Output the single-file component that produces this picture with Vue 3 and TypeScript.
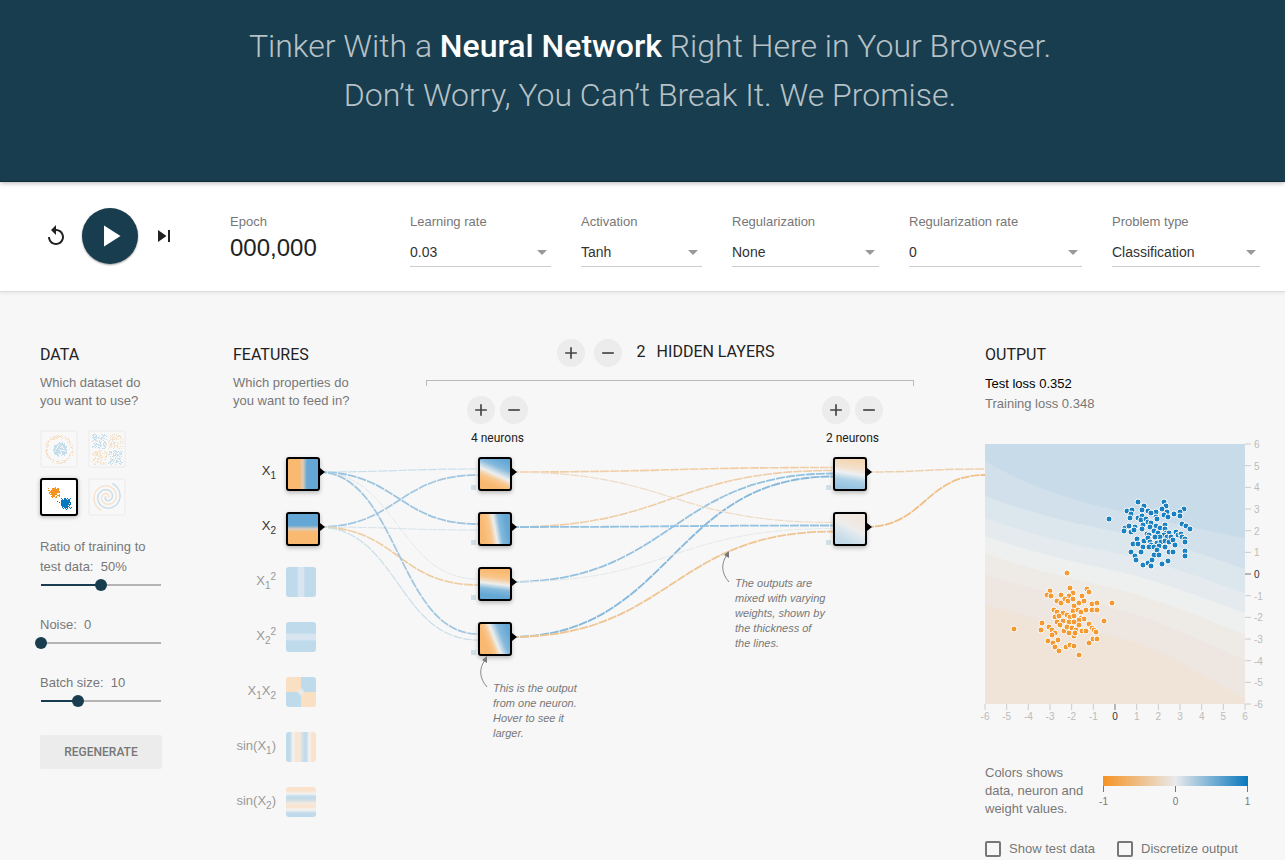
<script setup lang="ts">
import { computed, onBeforeUnmount, onMounted, ref } from 'vue'

type Pt = [number, number]

const selects = [
  { id: 'rate', label: 'Learning rate', value: '0.03', options: ['0.001', '0.01', '0.03', '0.1', '1'] },
  { id: 'activation', label: 'Activation', value: 'Tanh', options: ['ReLU', 'Tanh', 'Sigmoid', 'Linear'] },
  { id: 'regularization', label: 'Regularization', value: 'None', options: ['None', 'L1', 'L2'] },
  { id: 'regrate', label: 'Regularization rate', value: '0', options: ['0', '0.001', '0.01', '0.1'] },
  { id: 'problem', label: 'Problem type', value: 'Classification', options: ['Classification', 'Regression'] },
]

const ratio = ref(50)
const noise = ref(0)
const batch = ref(10)
const share = (v: number, min: number, max: number) => ({ '--fill': String((v - min) / (max - min)) })

/* Deterministic pseudo-random source for the dataset thumbnails */
let seed = 11
function rnd(): number {
  seed = (seed * 16807) % 2147483647
  return seed / 2147483647
}
function gauss(): number {
  return (rnd() + rnd() + rnd() + rnd() - 2) * 1.7
}
const BLUE = '#0877bd'
const ORANGE = '#f59322'
interface Dot { x: number; y: number; c: string }
function blob(n: number, cx: number, cy: number, s: number, c: string): Dot[] {
  return Array.from({ length: n }, () => ({ x: Math.round(cx + gauss() * s), y: Math.round(cy + gauss() * s), c }))
}
const circleDots: Dot[] = [
  ...Array.from({ length: 200 }, () => {
    const a = rnd() * Math.PI * 2
    const r = Math.sqrt(rnd()) * 7
    return { x: Math.round(18 + r * Math.cos(a)), y: Math.round(17 + r * Math.sin(a)), c: BLUE }
  }),
  ...Array.from({ length: 170 }, () => {
    const a = rnd() * Math.PI * 2
    const r = 11.5 + rnd() * 3
    return { x: Math.round(17 + r * Math.cos(a)), y: Math.round(17 + r * Math.sin(a)), c: ORANGE }
  }),
]
const xorDots: Dot[] = Array.from({ length: 430 }, () => {
  const x = Math.round(rnd() * 14) + (rnd() > 0.5 ? 18 : 2)
  const y = Math.round(rnd() * 14) + (rnd() > 0.5 ? 18 : 2)
  return { x, y, c: (x > 16) === (y > 16) ? BLUE : ORANGE }
})
const gaussDots: Dot[] = [
  ...blob(260, 12, 12, 2.1, ORANGE),
  ...blob(260, 23, 23, 2.3, BLUE),
  { x: 15, y: 21, c: BLUE },
  { x: 28, y: 18, c: BLUE },
]
function spiral(phase: number): string {
  const pts: string[] = []
  for (let i = 0; i <= 60; i++) {
    const t = (i / 60) * Math.PI * 3.5
    const r = 1 + (i / 60) * 13.5
    pts.push(`${(17 + r * Math.sin(t + phase)).toFixed(1)},${(17 + r * Math.cos(t + phase)).toFixed(1)}`)
  }
  return pts.join(' ')
}
const datasets = [
  { name: 'Circle', dots: circleDots },
  { name: 'Exclusive or', dots: xorDots },
  { name: 'Gaussian', dots: gaussDots },
  { name: 'Spiral', dots: [] as Dot[] },
]
const dataset = ref('Gaussian')

/* Network geometry */
const ROW = 55
const TOP = 61
const FEATURE_X = 53
const features = [
  { pre: '', a: '1', sup: '', b: '', post: '', look: 'f-x1', on: true },
  { pre: '', a: '2', sup: '', b: '', post: '', look: 'f-x2', on: true },
  { pre: '', a: '1', sup: '2', b: '', post: '', look: 'f-x1sq', on: false },
  { pre: '', a: '2', sup: '2', b: '', post: '', look: 'f-x2sq', on: false },
  { pre: '', a: '1', sup: '', b: '2', post: '', look: 'f-x1x2', on: false },
  { pre: 'sin(', a: '1', sup: '', b: '', post: ')', look: 'f-sin1', on: false },
  { pre: 'sin(', a: '2', sup: '', b: '', post: ')', look: 'f-sin2', on: false },
]
const network = ref<HTMLElement | null>(null)
const width = ref(752)
let observer: ResizeObserver | undefined
onMounted(() => {
  if (!network.value) return
  width.value = network.value.clientWidth
  observer = new ResizeObserver(() => {
    if (network.value) width.value = network.value.clientWidth
  })
  observer.observe(network.value)
})
onBeforeUnmount(() => observer?.disconnect())

const layers = computed(() => [
  { x: 245, looks: ['n-a', 'n-b', 'n-c', 'n-d'] },
  { x: width.value - 152, looks: ['n-e', 'n-f'] },
])
const at = (x: number, row: number) => ({ left: `${x}px`, top: `${TOP + ROW * row}px` })

interface Link { d: string; w: number; c: string }
function link(x1: number, r1: number, x2: number, r2: number, i: number, n: number, w: number, c: string): Link {
  const y1 = TOP + ROW * r1 + 15
  const y2 = TOP + ROW * r2 + 15 + ((i - (n - 1) / 2) / n) * 12
  const m = (x1 + 32 + x2) / 2
  return { d: `M${x1 + 32},${y1}C${m},${y1} ${m},${y2} ${x2},${y2}`, w, c }
}
const links = computed<Link[]>(() => {
  const f = FEATURE_X
  const [a, b] = layers.value.map((l) => l.x)
  const o = width.value
  return [
    link(f, 0, a, 0, 0, 2, 1.2, '#c9dfea'),
    link(f, 1, a, 0, 1, 2, 1.7, '#a0c6e0'),
    link(f, 0, a, 1, 0, 2, 1.8, '#9bc4e0'),
    link(f, 1, a, 1, 1, 2, 1, '#d6e3ea'),
    link(f, 0, a, 2, 0, 2, 0.9, '#e2e5e7'),
    link(f, 1, a, 2, 1, 2, 1.6, '#efcba0'),
    link(f, 0, a, 3, 0, 2, 1.7, '#a0c6e0'),
    link(f, 1, a, 3, 1, 2, 1.2, '#c9dfea'),
    link(a, 0, b, 0, 0, 4, 1.6, '#efcda6'),
    link(a, 1, b, 0, 1, 4, 1.6, '#efcda6'),
    link(a, 2, b, 0, 2, 4, 1.8, '#94c1df'),
    link(a, 3, b, 0, 3, 4, 1.9, '#86b9dc'),
    link(a, 0, b, 1, 0, 4, 1.2, '#eedac4'),
    link(a, 1, b, 1, 1, 4, 1.8, '#94c1df'),
    link(a, 2, b, 1, 2, 4, 0.9, '#e3e5e6'),
    link(a, 3, b, 1, 3, 4, 1.8, '#efc592'),
    link(b, 0, o, 0, 0, 2, 1.5, '#efd0ac'),
    link(b, 1, o, 0, 1, 2, 1.8, '#efbf83'),
  ]
})

/* Output plot */
const ticks = [-6, -5, -4, -3, -2, -1, 0, 1, 2, 3, 4, 5, 6]
const scale = (v: number) => ((v + 6) * 260) / 12
const bands = [
  { c: '#d2e0eb', d: 'M0,17 C40,41 85,56 130,66 S225,88 260,94 V260 H0Z' },
  { c: '#dbe6ed', d: 'M0,52 C45,69 90,80 135,88 S225,113 260,125 V260 H0Z' },
  { c: '#e4eaee', d: 'M0,74 C45,90 90,101 135,110 S225,137 260,149 V260 H0Z' },
  { c: '#eef0ef', d: 'M0,92 C45,108 90,118 135,128 S225,157 260,169 V260 H0Z' },
  { c: '#eeebe7', d: 'M0,109 C45,126 90,135 135,146 S225,177 260,190 V260 H0Z' },
  { c: '#eee6e0', d: 'M0,130 C45,145 90,154 135,166 S225,201 260,216 V260 H0Z' },
  { c: '#efe4d7', d: 'M0,160 C45,175 90,182 135,194 S225,237 260,255 V260 H0Z' },
]
const bluePoints: Pt[] = [
  [153, 58], [179, 58], [181, 62], [159, 62], [142, 67], [147, 66], [146, 70], [157, 66], [163, 67], [171, 68],
  [177, 65], [182, 68], [199, 65], [195, 68], [189, 70], [195, 72], [124, 75], [145, 74], [153, 74], [157, 72],
  [156, 76], [161, 75], [166, 69], [171, 73], [179, 71], [183, 73], [172, 75], [197, 80], [201, 82], [205, 85],
  [140, 84], [144, 82], [150, 83], [139, 87], [146, 88], [149, 86], [158, 81], [157, 85], [163, 78], [166, 79],
  [165, 83], [171, 82], [175, 84], [180, 81], [180, 85], [169, 87], [173, 89], [162, 90], [164, 91], [181, 89],
  [184, 89], [179, 91], [191, 88], [193, 91], [196, 90], [197, 93], [200, 95], [200, 98], [175, 93], [182, 93],
  [186, 93], [152, 95], [148, 100], [153, 100], [159, 97], [163, 94], [165, 98], [166, 101], [170, 93], [172, 99],
  [176, 98], [180, 97], [184, 98], [188, 96], [190, 101], [158, 103], [164, 103], [169, 103], [174, 102], [180, 103],
  [172, 106], [146, 108], [156, 108], [150, 112], [151, 116], [169, 111], [174, 111], [184, 108], [188, 108], [200, 107],
  [200, 112], [158, 121], [163, 119], [167, 116], [166, 122], [177, 120], [183, 117],
]
const orangePoints: Pt[] = [
  [82, 129], [85, 144], [102, 145], [104, 148], [65, 147], [62, 151], [66, 152], [76, 151], [88, 149], [84, 152],
  [97, 152], [127, 159], [72, 157], [76, 159], [80, 155], [83, 157], [88, 155], [94, 159], [99, 157], [89, 162],
  [107, 160], [112, 159], [69, 166], [72, 168], [78, 169], [88, 167], [93, 166], [96, 168], [101, 166], [107, 166],
  [112, 166], [119, 177], [70, 173], [74, 172], [82, 171], [85, 173], [89, 172], [96, 174], [99, 175], [94, 176],
  [78, 177], [72, 178], [84, 178], [89, 178], [57, 179], [29, 185], [56, 186], [64, 183], [67, 186], [70, 189],
  [67, 191], [75, 181], [79, 187], [82, 183], [84, 189], [87, 184], [91, 186], [94, 181], [97, 187], [101, 187],
  [104, 180], [107, 184], [109, 186], [111, 188], [89, 192], [90, 189], [63, 197], [68, 199], [73, 196], [70, 203],
  [74, 207], [81, 203], [85, 201], [89, 202], [94, 211], [104, 199], [108, 195], [112, 195],
]
</script>

<template>
  <div class="page">
    <header class="banner">
      <h1>
        Tinker With a <b>Neural Network</b> Right Here in Your Browser.<br />
        Don’t Worry, You Can’t Break It. We Promise.
      </h1>
    </header>

    <section class="controls">
      <div class="timeline">
        <button class="icon-btn" type="button" aria-label="Reset">
          <svg width="24" height="24" viewBox="0 0 24 24"><path d="M12 5V1L7 6l5 5V7c3.31 0 6 2.69 6 6s-2.69 6-6 6-6-2.69-6-6H4c0 4.42 3.58 8 8 8s8-3.58 8-8-3.58-8-8-8z" /></svg>
        </button>
        <button class="play" type="button" aria-label="Run">
          <svg width="36" height="36" viewBox="0 0 24 24"><path d="M8 5v14l11-7z" /></svg>
        </button>
        <button class="icon-btn" type="button" aria-label="Step">
          <svg width="24" height="24" viewBox="0 0 24 24"><path d="M6 18l8.5-6L6 6v12zM16 6v12h2V6h-2z" /></svg>
        </button>
      </div>
      <div class="epoch">
        <span class="caption">Epoch</span>
        <span class="count">000,000</span>
      </div>
      <div class="fields">
        <div v-for="s in selects" :key="s.id" class="field" :class="`field-${s.id}`">
          <label class="caption" :for="s.id">{{ s.label }}</label>
          <div class="select">
            <select :id="s.id">
              <option v-for="o in s.options" :key="o" :selected="o === s.value">{{ o }}</option>
            </select>
            <svg width="10" height="5" viewBox="0 0 10 5"><path d="M0 0h10L5 5z" /></svg>
          </div>
        </div>
      </div>
    </section>

    <main class="main">
      <section class="data">
        <h2>Data</h2>
        <p class="intro">Which dataset do you want to use?</p>
        <div class="thumbs">
          <button
            v-for="d in datasets"
            :key="d.name"
            type="button"
            class="thumb"
            :class="{ selected: dataset === d.name }"
            :aria-label="d.name"
            @click="dataset = d.name"
          >
            <svg width="34" height="34" viewBox="0 0 34 34">
              <rect v-for="(p, i) in d.dots" :key="i" :x="p.x" :y="p.y" width="1" height="1" :fill="p.c" />
              <g v-if="d.name === 'Spiral'" fill="none" stroke-width="1.4">
                <polyline :points="spiral(1.2)" stroke="#f59322" />
                <polyline :points="spiral(4.34)" stroke="#0877bd" />
              </g>
            </svg>
          </button>
        </div>
        <div class="slider">
          <label for="ratio">Ratio of training to test data:&nbsp; {{ ratio }}%</label>
          <input id="ratio" v-model.number="ratio" type="range" min="10" max="90" step="10" :style="share(ratio, 10, 90)" />
        </div>
        <div class="slider">
          <label for="noise">Noise:&nbsp; {{ noise }}</label>
          <input id="noise" v-model.number="noise" type="range" min="0" max="50" step="5" :style="share(noise, 0, 50)" />
        </div>
        <div class="slider">
          <label for="batch">Batch size:&nbsp; {{ batch }}</label>
          <input id="batch" v-model.number="batch" type="range" min="1" max="30" step="1" :style="share(batch, 1, 30)" />
        </div>
        <button class="regenerate" type="button">Regenerate</button>
      </section>

      <section ref="network" class="network">
        <div class="network-head">
          <div class="features-head">
            <h2>Features</h2>
            <p class="intro">Which properties do you want to feed in?</p>
          </div>
          <div class="layers-head">
            <div class="layers-title">
              <button class="round" type="button" aria-label="Add layer">
                <svg width="20" height="20" viewBox="0 0 24 24"><path d="M19 13h-6v6h-2v-6H5v-2h6V5h2v6h6v2z" /></svg>
              </button>
              <button class="round" type="button" aria-label="Remove layer">
                <svg width="20" height="20" viewBox="0 0 24 24"><path d="M19 13H5v-2h14v2z" /></svg>
              </button>
              <span class="layer-count">2</span>
              <h2>Hidden layers</h2>
            </div>
            <div class="bracket"></div>
          </div>
        </div>

        <div class="diagram">
          <svg class="links" width="100%" height="100%">
            <path v-for="(l, i) in links" :key="i" :d="l.d" :stroke="l.c" :stroke-width="l.w" />
          </svg>

          <template v-for="(f, i) in features" :key="f.look">
            <div class="feature-label" :class="{ off: !f.on }" :style="at(0, i)">
              <span>{{ f.pre }}X<sub>{{ f.a }}</sub><sup v-if="f.sup">{{ f.sup }}</sup><template v-if="f.b">X<sub>{{ f.b }}</sub></template>{{ f.post }}</span>
            </div>
            <button type="button" class="node" :class="[f.look, { off: !f.on }]" :aria-label="`Feature ${i + 1}`" :style="at(FEATURE_X, i)"></button>
          </template>

          <template v-for="(layer, k) in layers" :key="k">
            <div class="layer-tools" :style="{ left: `${layer.x - 11}px` }">
              <div class="layer-buttons">
                <button class="round" type="button" aria-label="Add neuron">
                  <svg width="20" height="20" viewBox="0 0 24 24"><path d="M19 13h-6v6h-2v-6H5v-2h6V5h2v6h6v2z" /></svg>
                </button>
                <button class="round" type="button" aria-label="Remove neuron">
                  <svg width="20" height="20" viewBox="0 0 24 24"><path d="M19 13H5v-2h14v2z" /></svg>
                </button>
              </div>
              <span>{{ layer.looks.length }} neurons</span>
            </div>
            <template v-for="(look, i) in layer.looks" :key="look">
              <i class="bias" :style="{ left: `${layer.x - 7}px`, top: `${TOP + ROW * i + 28}px` }"></i>
              <button type="button" class="node" :class="look" :aria-label="`Layer ${k + 1} neuron ${i + 1}`" :style="at(layer.x, i)"></button>
            </template>
          </template>

          <div class="callout callout-neuron">
            <svg width="14" height="34" viewBox="0 0 14 34"><path class="line" d="M8 33C0 24 0 14 6 6" /><path d="M8 2L8 9L3 6z" /></svg>
            <p>This is the output from one neuron. Hover to see it larger.</p>
          </div>
          <div class="callout callout-weights">
            <svg width="14" height="34" viewBox="0 0 14 34"><path class="line" d="M8 33C0 24 0 14 6 6" /><path d="M8 2L8 9L3 6z" /></svg>
            <p>The outputs are mixed with varying weights, shown by the thickness of the lines.</p>
          </div>
        </div>
      </section>

      <section class="output">
        <h2>Output</h2>
        <div class="losses">
          <div class="test">Test loss <span>0.352</span></div>
          <div>Training loss <span>0.348</span></div>
        </div>
        <svg class="plot" width="260" height="260" viewBox="0 0 260 260">
          <rect width="260" height="260" fill="#c8dbe9" />
          <path v-for="b in bands" :key="b.c" :d="b.d" :fill="b.c" />
          <g class="points">
            <circle v-for="(p, i) in bluePoints" :key="`b${i}`" :cx="p[0]" :cy="p[1]" r="3" fill="#0877bd" />
            <circle v-for="(p, i) in orangePoints" :key="`o${i}`" :cx="p[0]" :cy="p[1]" r="3" fill="#f59322" />
          </g>
          <g v-for="t in ticks" :key="t" class="tick" :class="{ zero: t === 0 }">
            <path :d="`M${scale(t)} 260v6`" />
            <text :x="scale(t)" y="276" text-anchor="middle">{{ t }}</text>
            <path :d="`M260 ${scale(-t)}h6`" />
            <text x="269" :y="scale(-t) + 4">{{ t }}</text>
          </g>
        </svg>
        <div class="legend">
          <p>Colors shows data, neuron and weight values.</p>
          <div class="colormap">
            <div class="ramp"></div>
            <div class="marks"><span>-1</span><span>0</span><span>1</span></div>
          </div>
        </div>
        <div class="checks">
          <label><input type="checkbox" />Show test data</label>
          <label><input type="checkbox" />Discretize output</label>
        </div>
      </section>
    </main>
  </div>
</template>

<style>
html,
body {
  background: #f7f7f7;
}
</style>

<style scoped>
.page {
  font-family: "Liberation Sans", Arial, sans-serif;
  font-size: 13px;
  color: #777;
}
.page * {
  box-sizing: border-box;
}
button {
  font: inherit;
  padding: 0;
  border: 0;
  cursor: pointer;
}
h1,
h2,
p {
  margin: 0;
}
h2 {
  font: 400 16px/24px Roboto, sans-serif;
  text-transform: uppercase;
  color: #222;
}
.banner {
  position: relative;
  z-index: 2;
  min-height: 182px;
  padding: 22px 0 0 15px;
  background: #183d4e;
  border-bottom: 1px solid #0f2b38;
  box-shadow: 0 1px 5px rgba(0, 0, 0, 0.3);
  text-align: center;
}
h1 {
  font: 300 32px/49px Roboto, sans-serif;
  color: rgba(255, 255, 255, 0.7);
}
h1 b {
  font-weight: 500;
  color: #fff;
}
.controls {
  position: relative;
  z-index: 1;
  display: flex;
  align-items: flex-start;
  height: 110px;
  padding: 26px 25px 0 44px;
  background: #fff;
  border-bottom: 1px solid #ddd;
  box-shadow: 0 1px 4px rgba(0, 0, 0, 0.08);
}
.timeline {
  display: flex;
  align-items: center;
  gap: 14px;
  width: 186px;
}
.icon-btn {
  display: flex;
  width: 24px;
  height: 24px;
  background: none;
  fill: #222;
}
.play {
  display: flex;
  align-items: center;
  justify-content: center;
  width: 56px;
  height: 56px;
  border-radius: 50%;
  background: #183d4e;
  fill: #fff;
  box-shadow: 0 1px 2px rgba(0, 0, 0, 0.4);
}
.epoch {
  display: flex;
  flex-direction: column;
  width: 180px;
  padding-top: 4px;
}
.caption {
  display: block;
  line-height: 20px;
}
.count {
  font-size: 24px;
  line-height: 32px;
  color: #222;
}
.fields {
  display: flex;
  flex: 1;
  gap: 30px;
  padding-top: 4px;
}
.field {
  flex: 147 1 0;
  min-width: 0;
}
.field-rate { flex-grow: 141; }
.field-activation { flex-grow: 121; }
.field-regrate { flex-grow: 173; }
.field-problem { flex-grow: 148; }
.select {
  display: grid;
  align-items: center;
  margin-top: 6px;
  border-bottom: 1px solid #ccc;
}
.select > * {
  grid-area: 1 / 1;
}
.select select {
  width: 100%;
  height: 28px;
  padding: 0;
  border: 0;
  appearance: none;
  background: none;
  font: 14px/20px "Liberation Sans", Arial, sans-serif;
  color: #333;
}
.select svg {
  justify-self: end;
  margin-right: 4px;
  fill: #999;
  pointer-events: none;
}
.main {
  display: flex;
  padding: 51px 40px 0;
}
.data {
  width: 122px;
  margin-right: 71px;
}
.intro {
  width: 122px;
  margin-top: 7px;
  line-height: 18px;
}
.thumbs {
  display: grid;
  grid-template-columns: 38px 38px;
  gap: 10px;
  margin: 20px 0 21px;
}
.thumb {
  width: 38px;
  height: 38px;
  border: 2px solid #ddd;
  border-radius: 3px;
  background: #fff;
  opacity: 0.2;
}
.thumb svg {
  display: block;
}
.thumb.selected {
  border-color: #000;
  opacity: 1;
  box-shadow: 0 1px 4px rgba(0, 0, 0, 0.3);
}
.slider {
  margin-bottom: 22px;
}
.slider label {
  display: block;
  line-height: 20px;
}
.slider input {
  display: block;
  width: 132px;
  height: 16px;
  margin: 0 0 0 -5px;
  appearance: none;
  background:
    linear-gradient(#183d4e, #183d4e) 6px center / calc((100% - 12px) * var(--fill)) 2px no-repeat,
    linear-gradient(#b4b4b4, #b4b4b4) 6px center / calc(100% - 12px) 2px no-repeat;
}
.slider input::-webkit-slider-thumb {
  appearance: none;
  width: 12px;
  height: 12px;
  border-radius: 50%;
  background: #183d4e;
}
.regenerate {
  width: 122px;
  height: 34px;
  margin-top: 4px;
  border-radius: 2px;
  background: #ececec;
  font: 500 12px/34px Roboto, sans-serif;
  text-transform: uppercase;
  color: #777;
}
.network {
  flex: 1;
  min-width: 0;
}
.network-head {
  display: flex;
  height: 53px;
}
.features-head {
  width: 193px;
}
.layers-head {
  flex: 1;
  margin-right: 71px;
}
.layers-title {
  display: flex;
  align-items: flex-start;
  justify-content: center;
  gap: 9px;
  margin-top: -4px;
  padding-right: 9px;
}
.layers-title h2 {
  margin-left: 2px;
  line-height: 26px;
}
.layer-count {
  margin-left: 6px;
  font: 16px/26px Roboto, sans-serif;
  color: #222;
}
.bracket {
  height: 6px;
  margin-top: 13px;
  border: 1px solid #bbb;
  border-bottom: 0;
}
.round {
  display: flex;
  align-items: center;
  justify-content: center;
  width: 28px;
  height: 28px;
  border-radius: 50%;
  background: #ececec;
  fill: #444;
}
.diagram {
  position: relative;
  height: 424px;
}
.links {
  position: absolute;
  inset: 0;
  fill: none;
  stroke-dasharray: 9 1;
}
.feature-label {
  position: absolute;
  width: 43px;
  line-height: 28px;
  text-align: right;
  white-space: nowrap;
  color: #333;
}
.feature-label span {
  float: right;
}
.feature-label.off {
  color: #999;
}
sub,
sup {
  font-size: 10px;
  line-height: 0;
}
.node {
  position: absolute;
  width: 34px;
  height: 34px;
  border: 2px solid #000;
  border-radius: 3px;
  background-origin: padding-box;
  box-shadow: 0 2px 4px rgba(0, 0, 0, 0.25);
}
.node::after {
  content: "";
  position: absolute;
  left: 32px;
  top: 9px;
  border: 4px solid transparent;
  border-left: 5px solid #000;
  border-right: 0;
}
.node.off {
  width: 30px;
  height: 30px;
  border: 0;
  box-shadow: none;
}
.node.off::after {
  content: none;
}
.f-x1 { background-image: linear-gradient(90deg, #f9b970 38%, #dccdbb 50%, #64a7d5 63%); }
.f-x2 { background-image: linear-gradient(0deg, #f9b970 40%, #dccdbb 50%, #64a7d5 62%); }
.f-x1sq { background-image: linear-gradient(90deg, #bfdaea 36%, #d8e5f0 42%, #d8e5f0 58%, #bfdaea 64%); }
.f-x2sq { background-image: linear-gradient(0deg, #bfdaea 36%, #d8e5f0 42%, #d8e5f0 58%, #bfdaea 64%); }
.f-x1x2 {
  background-image:
    radial-gradient(circle, #e9ebea 6%, rgba(233, 235, 234, 0) 20%),
    conic-gradient(#bfdaea 0 25%, #f9e0c3 0 50%, #bfdaea 0 75%, #f9e0c3 0);
}
.f-sin1 { background-image: linear-gradient(90deg, #bfdaea 12%, #f3f3f2 24%, #fae2cc 34%, #f6e9dc 44%, #bfdaea 63%, #c7deeb 70%, #f3f3f2 77%, #fae2cc 88%); }
.f-sin2 { background-image: linear-gradient(0deg, #bfdaea 12%, #f3f3f2 24%, #fae2cc 34%, #f6e9dc 44%, #bfdaea 63%, #c7deeb 70%, #f3f3f2 77%, #fae2cc 88%); }
.n-a { background-image: linear-gradient(24deg, #f9b970 20%, #f8c78e 36%, #edeeee 50%, #84b9dc 70%, #64a7d5 90%); }
.n-b { background-image: linear-gradient(80deg, #f9b970 15%, #f8c78e 36%, #edeeee 50%, #84b9dc 65%, #64a7d5 85%); }
.n-c { background-image: linear-gradient(187deg, #f9b970 12%, #f8c78e 32%, #edeeee 50%, #84b9dc 66%, #64a7d5 85%); }
.n-d { background-image: linear-gradient(68deg, #f9b970 25%, #f8c78e 38%, #edeeee 50%, #84b9dc 68%, #64a7d5 90%); }
.n-e { background-image: linear-gradient(189deg, #f4d7b4 10%, #f3e0cc 32%, #eef0f1 48%, #acd0e6 68%, #94c3e1 92%); }
.n-f { background-image: linear-gradient(208deg, #f1e7e1 25%, #eeecea 46%, #dfe8ee 56%, #c2dae9 85%); }
.bias {
  position: absolute;
  width: 5px;
  height: 5px;
  background: #d1e0e8;
}
.layer-tools {
  position: absolute;
  top: 0;
  width: 61px;
  text-align: center;
  font: 12px/16px Roboto, sans-serif;
  color: #222;
  white-space: nowrap;
}
.layer-buttons {
  display: flex;
  gap: 5px;
  margin-bottom: 6px;
}
.callout {
  position: absolute;
  display: flex;
  align-items: flex-start;
  fill: #777;
  font: italic 11px/15px "Liberation Sans", Arial, sans-serif;
}
.callout .line {
  fill: none;
  stroke: #888;
}
.callout p {
  width: 92px;
  margin-top: 27px;
}
.callout-neuron {
  left: 246px;
  top: 258px;
}
.callout-weights {
  right: 158px;
  top: 153px;
}
.output {
  width: 260px;
}
.losses {
  margin-top: 7px;
  line-height: 20px;
}
.losses .test {
  color: #000;
}
.plot {
  display: block;
  margin-top: 30px;
  overflow: visible;
}
.points {
  stroke: #fff;
  stroke-width: 1;
  opacity: 0.9;
}
.tick path {
  stroke: #ccc;
}
.tick text {
  font-size: 10px;
  fill: #bbb;
}
.tick.zero path {
  stroke: #777;
}
.tick.zero text {
  fill: #333;
}
.legend {
  display: flex;
  gap: 8px;
  margin-top: 60px;
}
.legend p {
  flex: none;
  width: 110px;
  line-height: 18px;
}
.colormap {
  flex: none;
  width: 145px;
  padding-top: 12px;
}
.ramp {
  height: 10px;
  background: linear-gradient(90deg, #f59322, #e8eaeb, #0877bd);
}
.marks {
  display: flex;
  justify-content: space-between;
  margin: 0 -10px;
  font-size: 10px;
}
.marks span {
  width: 21px;
  padding-top: 4px;
  text-align: center;
  background: linear-gradient(#777, #777) center top / 1px 6px no-repeat;
  line-height: 24px;
}
.checks {
  display: flex;
  gap: 22px;
  margin-top: 22px;
  white-space: nowrap;
}
.checks label {
  display: flex;
  align-items: center;
  gap: 8px;
  line-height: 18px;
}
.checks input {
  width: 16px;
  height: 16px;
  margin: 0;
  appearance: none;
  border: 2px solid #777;
  border-radius: 2px;
}
</style>
